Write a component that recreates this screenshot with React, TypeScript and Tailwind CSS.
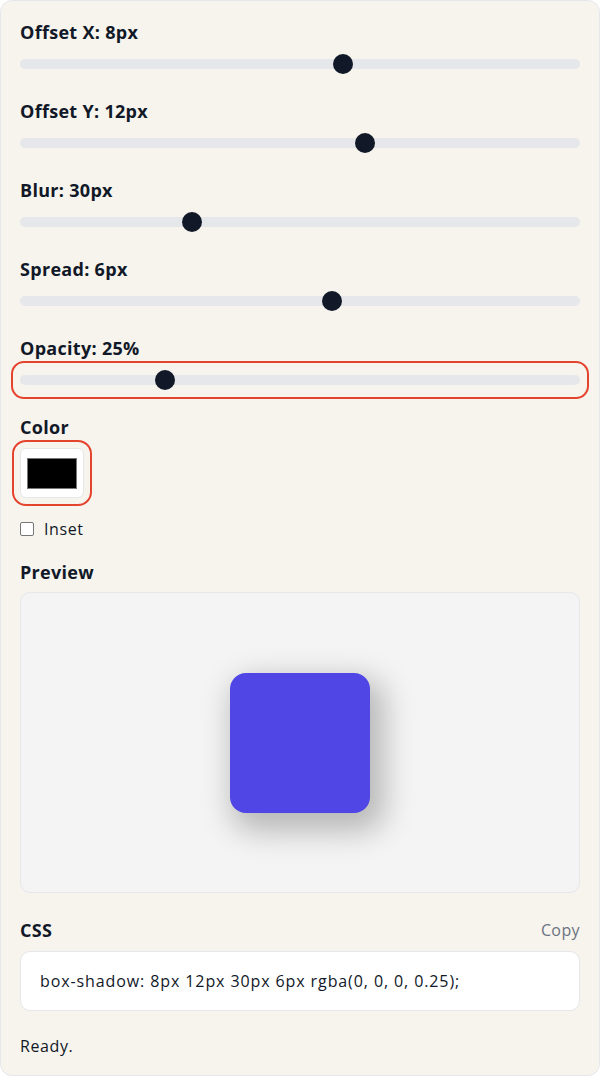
import { useState } from 'react';

type SliderProps = {
  label: string;
  value: number;
  min: number;
  max: number;
  unit: string;
  focused?: boolean;
};

const Slider = ({ label, value, min, max, unit, focused }: SliderProps) => {
  const pct = ((value - min) / (max - min)) * 100;
  return (
    <div className="flex flex-col">
      <div className="text-[18px] leading-7 font-bold tracking-[0.3px] text-[#111827]">
        {label}: {value}
        {unit}
      </div>
      <div
        className={
          focused
            ? 'relative mt-2 h-5 rounded-[4px] outline-[2.5px] outline-[#e4432e] outline-offset-[7px]'
            : 'relative mt-2 h-5 rounded-[4px]'
        }
      >
        <div className="absolute left-0 right-0 top-[5px] h-[10px] rounded-full bg-[#e5e7eb]" />
        <div className="absolute top-0 left-[10px] right-[10px] h-5">
          <div
            className="absolute top-0 h-5 w-5 -ml-[10px] rounded-full bg-[#111827]"
            style={{ left: `${pct}%` }}
          />
        </div>
      </div>
    </div>
  );
};

const App = () => {
  const [inset] = useState(false);
  const sliders: SliderProps[] = [
    { label: 'Offset X', value: 8, min: -50, max: 50, unit: 'px' },
    { label: 'Offset Y', value: 12, min: -50, max: 50, unit: 'px' },
    { label: 'Blur', value: 30, min: 0, max: 100, unit: 'px' },
    { label: 'Spread', value: 6, min: -50, max: 50, unit: 'px' },
    { label: 'Opacity', value: 25, min: 0, max: 100, unit: '%', focused: true },
  ];

  return (
    <div className="min-h-[1077px] bg-white" style={{ fontFamily: '"Open Sans", "Noto Sans", sans-serif' }}>
      <div className="rounded-xl border border-[#e5e7eb] bg-[#f7f4ee] px-[19px] pt-[17px] pb-[17px] text-[#111827]">
        <div className="flex flex-col gap-[23px]">
          {sliders.map((s) => (
            <Slider key={s.label} {...s} />
          ))}

          {/* Colour picker */}
          <div className="flex flex-col">
            <div className="text-[18px] leading-7 font-bold tracking-[0.3px]">Color</div>
            <div className="mt-[7px] flex">
              <div className="flex h-[50px] w-16 items-center justify-center rounded-[6px] border border-[#e5e7eb] bg-white outline-[2.5px] outline-[#e4432e] outline-offset-[6px]">
                <div className="h-[31px] w-[50px] border border-[#777] bg-black" />
              </div>
            </div>
            <label className="mt-[19px] flex items-center gap-[10px] text-[16px] leading-6 tracking-[0.6px]">
              <span
                className={
                  inset
                    ? 'h-[14px] w-[14px] rounded-[2px] border border-[#767676] bg-[#111827]'
                    : 'h-[14px] w-[14px] rounded-[2px] border border-[#767676] bg-white'
                }
              />
              Inset
            </label>
          </div>

          {/* Preview */}
          <div className="-mt-[6px] flex flex-col">
            <div className="text-[18px] leading-7 font-bold tracking-[0.3px]">Preview</div>
            <div className="mt-[6px] flex h-[301px] items-center justify-center rounded-[10px] border border-[#e5e7eb] bg-[#f4f4f4]">
              <div
                className="h-[140px] w-[140px] rounded-2xl bg-[#4f46e5]"
                style={{ boxShadow: '8px 12px 30px 6px rgba(0, 0, 0, 0.25)' }}
              />
            </div>
          </div>

          {/* CSS output */}
          <div className="flex flex-col">
            <div className="flex items-center justify-between">
              <div className="text-[18px] leading-7 font-bold tracking-[0.3px]">CSS</div>
              <button className="text-[16px] leading-6 tracking-[0.4px] text-[#6b7280]">Copy</button>
            </div>
            <div className="mt-[7px] flex h-[60px] items-center rounded-[10px] border border-[#e5e7eb] bg-white px-[19px] text-[16px] tracking-[0.9px]">
              box-shadow: 8px 12px 30px 6px rgba(0, 0, 0, 0.25);
            </div>
          </div>

          <div className="text-[16px] leading-6 tracking-[0.6px]">Ready.</div>
        </div>
      </div>
    </div>
  );
};

export default App;
